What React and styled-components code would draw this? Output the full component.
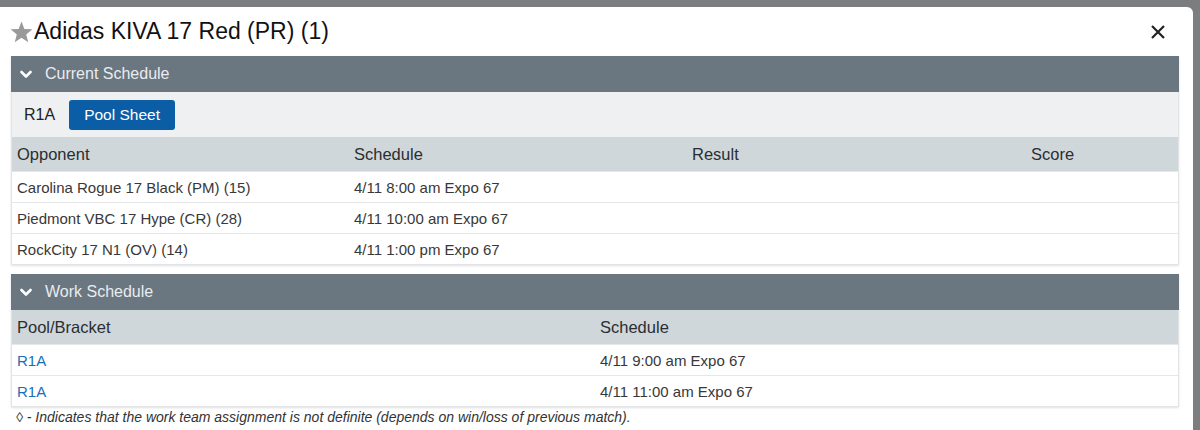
import styled, { createGlobalStyle } from 'styled-components';

const GlobalStyle = createGlobalStyle`
  body {
    margin: 0;
    background: #7b7d7f;
    font-family: "Liberation Sans", Arial, sans-serif;
  }
`;

const Backdrop = styled.div`
  height: 430px;
  padding: 7px 7px 0 0;
  box-sizing: border-box;
  overflow: hidden;
`;

const Modal = styled.div`
  background: #fff;
  border-top-right-radius: 6px;
  height: 100%;
  padding: 0 14px 0 11px;
  box-sizing: border-box;
`;

const TitleBar = styled.div`
  display: flex;
  align-items: center;
  justify-content: space-between;
  height: 49px;
  padding-right: 13px;
`;

const Title = styled.h1`
  display: flex;
  align-items: center;
  margin: 0 0 0 -1px;
  font-size: 23px;
  font-weight: normal;
  color: #111;
`;

const Close = styled.button`
  border: 0;
  background: none;
  padding: 0;
  display: flex;
  cursor: pointer;
`;

const Panel = styled.section`
  border: 1px solid #e2e4e6;
  border-top: 0;
  box-shadow: 0 1px 2px rgba(0, 0, 0, 0.12);
  margin-bottom: 9px;
  &:last-of-type {
    margin-bottom: 2px;
  }
`;

const PanelHeader = styled.div`
  display: flex;
  align-items: center;
  gap: 13px;
  height: 36px;
  padding-left: 9px;
  background: #6a7680;
  color: #e9ecef;
  font-size: 16px;
  margin: 0 -1px;
`;

const SubBar = styled.div`
  display: flex;
  align-items: center;
  gap: 14px;
  height: 45px;
  padding-left: 12px;
  background: #eff0f2;
  font-size: 16px;
  color: #222;
`;

const PoolButton = styled.button`
  background: #0b5ea5;
  color: #fff;
  border: 0;
  border-radius: 3px;
  height: 30px;
  padding: 0 15px;
  font-family: inherit;
  font-size: 15.5px;
`;

const Row = styled.div`
  display: grid;
  grid-template-columns: ${(p) => p.$cols};
  align-items: center;
  height: ${(p) => (p.$head ? '34px' : '31px')};
  background: ${(p) => (p.$head ? '#d0d7db' : '#fff')};
  border-top: ${(p) => (p.$head ? '0' : '1px solid #e6e7e9')};
  box-sizing: border-box;
  font-size: ${(p) => (p.$head ? '16.5px' : '15px')};
  color: ${(p) => (p.$head ? '#2a2e31' : '#383838')};
  & > span {
    padding-left: 5px;
  }
`;

const Link = styled.a`
  color: #1a70b5;
  text-decoration: none;
`;

const Note = styled.p`
  margin: 0;
  padding: 0 0 0 5px;
  line-height: 16px;
  font-size: 14px;
  font-style: italic;
  color: #333;
`;

const Chevron = () => (
  <svg width="12" height="9" viewBox="0 0 12 9">
    <path d="M1.5 2 L6 6.5 L10.5 2" fill="none" stroke="#fff" strokeWidth="2.6" strokeLinecap="round" strokeLinejoin="round" />
  </svg>
);

const Star = () => (
  <svg width="23" height="22" viewBox="0 0 24 23" style={{ marginRight: 1 }}>
    <path d="M12 0.5 L15 8.3 L23.4 8.7 L16.9 14 L19.1 22.2 L12 17.5 L4.9 22.2 L7.1 14 L0.6 8.7 L9 8.3 Z" fill="#9a9a9a" />
  </svg>
);

const CloseIcon = () => (
  <svg width="16" height="16" viewBox="0 0 16 16">
    <path d="M2 2 L14 14 M14 2 L2 14" stroke="#222" strokeWidth="2.2" />
  </svg>
);

const current = [
  ['Carolina Rogue 17 Black (PM) (15)', '4/11 8:00 am Expo 67'],
  ['Piedmont VBC 17 Hype (CR) (28)', '4/11 10:00 am Expo 67'],
  ['RockCity 17 N1 (OV) (14)', '4/11 1:00 pm Expo 67'],
];

const work = [
  ['R1A', '4/11 9:00 am Expo 67'],
  ['R1A', '4/11 11:00 am Expo 67'],
];

const schedCols = '337px 338px 339px 1fr';
const workCols = '583px 1fr';

export default function App() {
  return (
    <>
      <GlobalStyle />
      <Backdrop>
        <Modal>
          <TitleBar>
            <Title>
              <Star />
              Adidas KIVA 17 Red (PR) (1)
            </Title>
            <Close aria-label="Close">
              <CloseIcon />
            </Close>
          </TitleBar>

          <Panel>
            <PanelHeader>
              <Chevron />
              Current Schedule
            </PanelHeader>
            <SubBar>
              R1A
              <PoolButton>Pool Sheet</PoolButton>
            </SubBar>
            <Row $head $cols={schedCols}>
              <span>Opponent</span>
              <span>Schedule</span>
              <span>Result</span>
              <span>Score</span>
            </Row>
            {current.map(([team, when]) => (
              <Row key={team} $cols={schedCols}>
                <span>{team}</span>
                <span>{when}</span>
                <span></span>
                <span></span>
              </Row>
            ))}
          </Panel>

          <Panel>
            <PanelHeader>
              <Chevron />
              Work Schedule
            </PanelHeader>
            <Row $head $cols={workCols}>
              <span>Pool/Bracket</span>
              <span>Schedule</span>
            </Row>
            {work.map(([pool, when]) => (
              <Row key={when} $cols={workCols}>
                <span>
                  <Link href="#">{pool}</Link>
                </span>
                <span>{when}</span>
              </Row>
            ))}
          </Panel>

          <Note>◊ - Indicates that the work team assignment is not definite (depends on win/loss of previous match).</Note>
        </Modal>
      </Backdrop>
    </>
  );
}
